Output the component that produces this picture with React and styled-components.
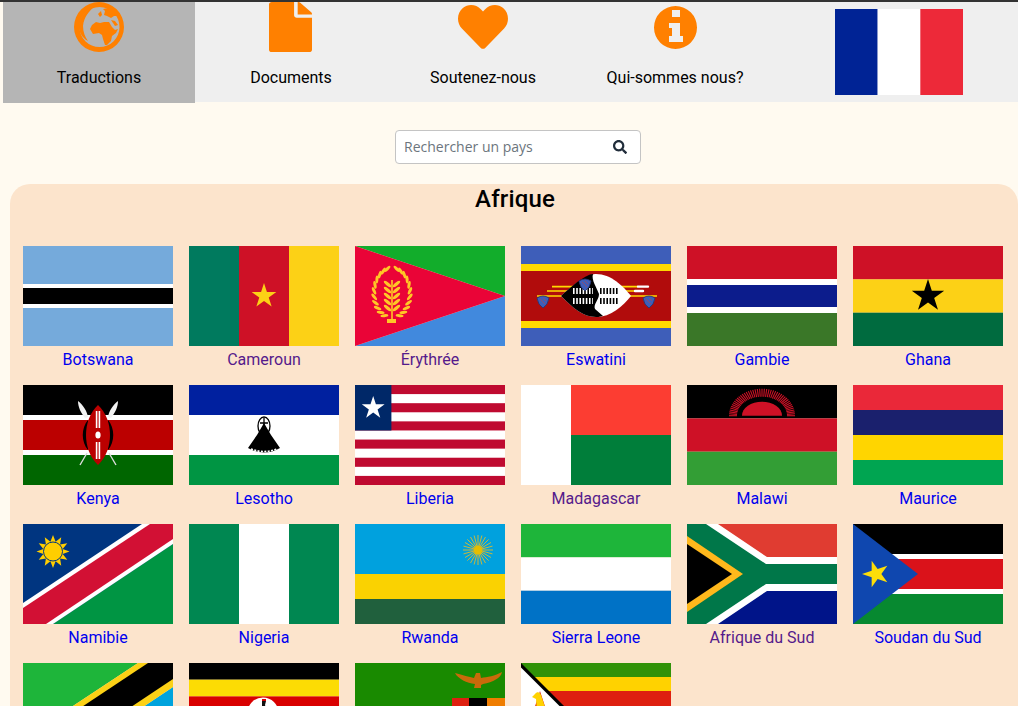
import React from 'react';
import styled, { createGlobalStyle } from 'styled-components';
import { FaHeart, FaSearch } from 'react-icons/fa';

const GlobalStyle = createGlobalStyle`
html, body {
    margin: 0;
    padding: 0;
    height: 706px;
    overflow: hidden;
    background: #fffaf0;
    font-family: Roboto, "Liberation Sans", sans-serif;
}
`;

const Page = styled.div`
height: 706px;
overflow: hidden;
border-top: 2px solid #333;
`;

const Nav = styled.nav`
display: flex;
height: 100px;
margin-left: 3px;
background: #efefef;
`;

const Tab = styled.a`
flex: 0 0 192px;
height: ${p => p.$active ? '101px' : '100px'};
overflow: hidden;
display: flex;
flex-direction: column;
align-items: center;
color: #000;
font-size: 16px;
background: ${p => p.$active ? '#b5b5b5' : 'transparent'};
`;

const TabIcon = styled.div`
height: 50px;
flex: none;
display: flex;
justify-content: center;
align-items: flex-end;
color: #ff8000;
padding-bottom: ${p => p.$bottom || 0}px;
padding-right: ${p => p.$right || 0}px;
box-sizing: border-box;
margin-bottom: 16px;
`;

const LangCell = styled.div`
flex: 1;
display: flex;
justify-content: center;
padding: 7px 0 0 9px;
`;

const SearchRow = styled.div`
display: flex;
justify-content: center;
padding: 28px 0 20px 18px;
`;

const SearchBox = styled.div`
width: 246px;
height: 34px;
box-sizing: border-box;
display: flex;
align-items: center;
justify-content: space-between;
padding: 0 13px 0 8px;
background: #fff;
border: 1px solid #c4c4c4;
border-radius: 4px;
color: #212d3b;
`;

const SearchInput = styled.input`
border: 0;
outline: 0;
width: 190px;
padding: 0;
margin-top: -2px;
background: transparent;
font: 14px "Open Sans", sans-serif;
&::placeholder { color: #6c757d; opacity: 1; }
`;

const Panel = styled.section`
margin-left: 10px;
background: #fce4cc;
border-radius: 20px 20px 0 0;
padding: 0 0 0 13px;
height: 600px;
`;

const Title = styled.h2`
margin: 0 0 31px -13px;
padding-left: 2px;
text-align: center;
font-size: 24px;
font-weight: 500;
letter-spacing: 0.15px;
line-height: 31px;
color: #000;
`;

const Grid = styled.div`
display: grid;
grid-template-columns: repeat(6, 150px);
column-gap: 16px;
grid-auto-rows: 139px;
`;

const Country = styled.a`
display: block;
text-align: center;
font-size: 16px;
line-height: 28px;
color: ${p => p.$visited ? '#551a8b' : '#0000ee'};
`;

const FlagSvg = styled.svg`
display: block;
width: ${p => p.$w || 150}px;
height: ${p => p.$h || 100}px;
`;

const Flag = ({ children, w, h }) => (
    <FlagSvg viewBox="0 0 150 100" $w={w} $h={h} preserveAspectRatio="none">
        {children}
    </FlagSvg>
);

const star = (cx, cy, r, rot = 0) => {
    const pts = [];
    for (let i = 0; i < 10; i++) {
        const a = (Math.PI / 5) * i - Math.PI / 2 + rot;
        const rr = i % 2 === 0 ? r : r * 0.382;
        pts.push(`${(cx + rr * Math.cos(a)).toFixed(2)},${(cy + rr * Math.sin(a)).toFixed(2)}`);
    }
    return pts.join(' ');
};

// sun with pointed rays (namibia)
const sunburst = (cx, cy, outer, inner, n) => {
    const pts = [];
    for (let i = 0; i < n * 2; i++) {
        const a = (Math.PI / n) * i - Math.PI / 2;
        const rr = i % 2 === 0 ? outer : inner;
        pts.push(`${(cx + rr * Math.cos(a)).toFixed(2)},${(cy + rr * Math.sin(a)).toFixed(2)}`);
    }
    return pts.join(' ');
};

const Rays = ({ cx, cy, r1, r2, n, color, width = 1 }) => (
    <g stroke={color} strokeWidth={width}>
        {Array.from({ length: n }).map((_, i) => {
            const a = (2 * Math.PI * i) / n;
            return <line key={i} x1={cx + r1 * Math.cos(a)} y1={cy + r1 * Math.sin(a)} x2={cx + r2 * Math.cos(a)} y2={cy + r2 * Math.sin(a)} />;
        })}
    </g>
);

const Bars = ({ rows }) => rows.map(([y, h, c]) => <rect key={y} x="0" y={y} width="150" height={h} fill={c} />);

// olive wreath of the eritrean flag, leaves laid out along two arcs
const Wreath = () => {
    const leaves = [];
    for (let i = 0; i < 11; i++) {
        const a = (Math.PI / 180) * (115 + i * 14);
        const x = 18 * Math.cos(a);
        const y = 47 + 25 * Math.sin(a);
        const deg = (a * 180) / Math.PI + 60;
        leaves.push(<ellipse key={`l${i}`} cx={37 + x} cy={y} rx="4" ry="1.5" transform={`rotate(${deg} ${37 + x} ${y})`} />);
        leaves.push(<ellipse key={`r${i}`} cx={37 - x} cy={y} rx="4" ry="1.5" transform={`rotate(${180 - deg} ${37 - x} ${y})`} />);
    }
    const twigs = [38, 44, 50, 56, 62];
    return (
        <g fill="#ffc726">
            {leaves}
            <path d="M37 75 V34" stroke="#ffc726" strokeWidth="1.6" />
            {twigs.map(y => (
                <g key={y}>
                    <ellipse cx="32.5" cy={y} rx="4.5" ry="1.7" transform={`rotate(40 32.5 ${y})`} />
                    <ellipse cx="41.5" cy={y} rx="4.5" ry="1.7" transform={`rotate(-40 41.5 ${y})`} />
                </g>
            ))}
            <rect x="32" y="73" width="9" height="4" />
        </g>
    );
};

const Tuft = ({ x, y }) => (
    <g>
        <path d={`M${x - 6} ${y - 3} Q${x} ${y - 7} ${x + 6} ${y - 3} Q${x + 5} ${y + 4} ${x} ${y + 7} Q${x - 5} ${y + 4} ${x - 6} ${y - 3}Z`} fill="#3e5eb9" stroke="#26346e" strokeWidth="0.8" />
        <path d={`M${x - 3} ${y - 2} L${x + 2} ${y + 3} M${x} ${y - 3} L${x + 3} ${y}`} stroke="#a04a5e" strokeWidth="0.8" />
    </g>
);

const flags = {
    botswana: <Bars rows={[[0, 100, '#75aadb'], [38, 24, '#fff'], [42, 16, '#000']]} />,
    cameroun: <>
        <Bars rows={[[0, 100, '#007a5e']]} />
        <rect x="50" width="50" height="100" fill="#ce1126" />
        <rect x="100" width="50" height="100" fill="#fcd116" />
        <polygon points={star(75, 50, 13)} fill="#fcd116" />
    </>,
    erythree: <>
        <polygon points="0,0 150,0 150,50" fill="#12ad2b" />
        <polygon points="0,100 150,100 150,50" fill="#4189dd" />
        <polygon points="0,0 150,50 0,100" fill="#ea0437" />
        <Wreath />
    </>,
    eswatini: <>
        <Bars rows={[[0, 100, '#3e5eb9'], [18, 64, '#ffd900'], [25, 50, '#b10c0c']]} />
        <path d="M31 40.6 H117 M26 45 H114 M16 50 H136" stroke="#ffd900" strokeWidth="1.6" />
        <path d="M117 40.6 L127 40.6 M114 45 L122 45" stroke="#fff" strokeWidth="2.4" strokeLinecap="round" />
        <path d="M40 50 C58 33 70 28 75 28 C90 28 102 40 110 50 C102 60 90 71 75 71 C62 71 52 62 40 50Z" fill="#fff" />
        <path d="M40 50 C58 33 68 28 72 28 C70 34 76 42 78 48 C78 54 72 58 74 63 L82 70 C78 71 76 71 75 71 C62 71 52 62 40 50Z" fill="#000" />
        <path d="M52 45h20M52 55h20" stroke="#fff" strokeWidth="6" strokeDasharray="1.6 1.6" />
        <path d="M79 45h19M79 55h19" stroke="#000" strokeWidth="6" strokeDasharray="1.6 1.6" />
        <Tuft x={64} y={38} />
        <Tuft x={22} y={55} />
        <Tuft x={128} y={55} />
    </>,
    gambie: <Bars rows={[[0, 100, '#ce1126'], [33, 34, '#fff'], [39, 22, '#0c1c8c'], [67, 33, '#3a7728']]} />,
    ghana: <>
        <Bars rows={[[0, 33.4, '#ce1126'], [33.4, 33.3, '#fcd116'], [66.7, 33.3, '#006b3f']]} />
        <polygon points={star(75, 50, 17)} fill="#000" />
    </>,
    kenya: <>
        <Bars rows={[[0, 30, '#000'], [30, 40, '#fff'], [35, 30, '#bb0000'], [70, 30, '#006600']]} />
        <path d="M57 80 L64 68 M93 80 L86 68" stroke="#ddd" strokeWidth="1.4" />
        <path d="M55 16 C60 20 64 26 65 32 L62 33 C58 28 55 22 55 16Z M95 16 C90 20 86 26 85 32 L88 33 C92 28 95 22 95 16Z" fill="#f2f2f2" />
        <path d="M65 35 C58 43 58 57 65 65Z M85 35 C92 43 92 57 85 65Z" fill="#000" />
        <path d="M75 20 C91 35 91 65 75 80 C59 65 59 35 75 20Z" fill="#bb0000" />
        <path d="M73.6 26 V43 M76.4 26 V43 M73.6 57 V74 M76.4 57 V74" stroke="#fff" strokeWidth="1.6" />
        <ellipse cx="75" cy="50" rx="2.6" ry="3.6" fill="#fff" />
    </>,
    lesotho: <>
        <Bars rows={[[0, 30, '#00209f'], [30, 40, '#fff'], [70, 30, '#009543']]} />
        <path d="M75 38 L82 50 L91 63 Q75 72 59 63 L68 50Z" fill="#000" />
        <ellipse cx="75" cy="41" rx="6" ry="9" fill="none" stroke="#000" strokeWidth="1.3" />
        <path d="M75 33 V48 M71 38 H79" stroke="#000" strokeWidth="1.3" />
        <path d="M62 64 Q75 69 88 64" fill="none" stroke="#fff" strokeWidth="1.6" strokeDasharray="2 1.4" />
    </>,
    liberia: <>
        <rect width="150" height="100" fill="#fff" />
        {[0, 2, 4, 6, 8, 10].map(i => <rect key={i} y={(i * 100) / 11} width="150" height={100 / 11} fill="#bf0a30" />)}
        <rect width="36.4" height="45.5" fill="#002868" />
        <polygon points={star(18.2, 23, 12)} fill="#fff" />
    </>,
    madagascar: <>
        <rect width="50" height="100" fill="#fff" />
        <rect x="50" width="100" height="50" fill="#fc3d32" />
        <rect x="50" y="50" width="100" height="50" fill="#007e3a" />
    </>,
    malawi: <>
        <Bars rows={[[0, 33.4, '#000'], [33.4, 33.3, '#ce1126'], [66.7, 33.3, '#339e35']]} />
        <path d="M55 30.7 A20 14 0 0 1 95 30.7Z" fill="#ce1126" />
        <g stroke="#ce1126" strokeWidth="1.1">
            {Array.from({ length: 45 }).map((_, i) => {
                const a = Math.PI + (Math.PI * i) / 44;
                return <line key={i} x1={75 + 25 * Math.cos(a)} y1={30.7 + 19 * Math.sin(a)} x2={75 + 33 * Math.cos(a)} y2={30.7 + 27 * Math.sin(a)} />;
            })}
        </g>
    </>,
    maurice: <Bars rows={[[0, 25, '#ea2839'], [25, 25, '#1a206d'], [50, 25, '#ffd500'], [75, 25, '#00a551']]} />,
    namibie: <>
        <rect width="150" height="100" fill="#003580" />
        <polygon points="30,100 150,20 150,100" fill="#009543" />
        <polygon points="0,79 119,0 150,0 150,20 30,100 0,100" fill="#fff" />
        <polygon points="0,84 127,0 150,0 150,15 23,100 0,100" fill="#d21034" />
        <polygon points={sunburst(30, 27.5, 16.5, 10, 12)} fill="#ffce00" />
        <circle cx="30" cy="27.5" r="9.5" fill="#ffce00" stroke="#003580" strokeWidth="1" />
    </>,
    nigeria: <>
        <rect width="150" height="100" fill="#008751" />
        <rect x="50" width="50" height="100" fill="#fff" />
    </>,
    rwanda: <>
        <Bars rows={[[0, 50, '#00a1de'], [50, 25, '#fad201'], [75, 25, '#20603d']]} />
        <Rays cx={123} cy={26} r1={4} r2={15} n={24} color="#c9b83c" width={1} />
        <circle cx="123" cy="26" r="4.5" fill="#e5be01" />
    </>,
    sierra: <Bars rows={[[0, 33.4, '#1eb53a'], [33.4, 33.3, '#fff'], [66.7, 33.3, '#0072c6']]} />,
    afriqueSud: <>
        <rect width="150" height="50" fill="#e03c31" />
        <rect y="50" width="150" height="50" fill="#001489" />
        <polygon points="0,0 31,0 80,33 150,33 150,67 80,67 31,100 0,100" fill="#fff" />
        <polygon points="0,0 19,0 79,40 150,40 150,60 79,60 19,100 0,100" fill="#007749" />
        <polygon points="0,12 56,50 0,88" fill="#ffb81c" />
        <polygon points="0,20 45,50 0,80" fill="#000" />
    </>,
    soudanSud: <>
        <Bars rows={[[0, 30, '#000'], [30, 40, '#fff'], [35, 30, '#da121a'], [70, 30, '#078930']]} />
        <polygon points="0,0 65,50 0,100" fill="#0f47af" />
        <polygon points={star(23, 50, 14, -Math.PI / 2)} fill="#fcdd09" />
    </>,
    tanzanie: <>
        <polygon points="0,0 115,0 0,76" fill="#1eb53a" />
        <polygon points="150,24 150,100 36,100" fill="#00a3dd" />
        <polygon points="115,0 150,0 150,24 36,100 0,100 0,76" fill="#fcd116" />
        <polygon points="125,0 150,0 150,16 24,100 0,100 0,83" fill="#000" />
    </>,
    ouganda: <>
        <Bars rows={[[0, 16.7, '#000'], [16.7, 16.7, '#fcdc04'], [33.4, 16.6, '#d90000'], [50, 16.7, '#000'], [66.7, 16.7, '#fcdc04'], [83.4, 16.6, '#d90000']]} />
        <circle cx="74" cy="50" r="15.5" fill="#fff" />
        <path d="M73 38 L77 38 L76 42 L78 48 L74 52 L71 48 L73 43Z" fill="#111" />
        <path d="M73 36 H77 V38 H73Z" fill="#d90000" />
    </>,
    zambie: <>
        <rect width="150" height="100" fill="#198a00" />
        <rect x="97" y="35" width="17" height="65" fill="#de2010" />
        <rect x="114" y="35" width="18" height="65" fill="#000" />
        <rect x="132" y="35" width="18" height="65" fill="#ef7d00" />
        <path d="M100 10 C108 12 114 14 119 15 L121 10 L125 10 L126 15 C132 14 140 13 147 9 C146 15 138 19 128 21 L126 22 L126 25 L119 25 L120 21 C112 20 103 16 100 10Z" fill="#c96a0a" />
    </>,
    zimbabwe: <>
        <Bars rows={[[0, 100, '#319208'], [14, 72, '#ffd200'], [28, 44, '#de2010'], [43, 14, '#000']]} />
        <polygon points="0,0 50,50 0,100" fill="#000" />
        <polygon points="0,4.5 45.5,50 0,95.5" fill="#fff" />
        <polygon points={star(19, 50, 22)} fill="#de2010" />
        <path d="M14 31 C16 28 19 29 20 32 L24 44 L16 50 L15 36 L11 34Z" fill="#ffd200" />
    </>,
};

// the last row's names are below the fold, so they are left out
const countries = [
    ['Botswana', 'botswana'], ['Cameroun', 'cameroun', true], ['Érythrée', 'erythree', true],
    ['Eswatini', 'eswatini'], ['Gambie', 'gambie'], ['Ghana', 'ghana'],
    ['Kenya', 'kenya'], ['Lesotho', 'lesotho'], ['Liberia', 'liberia'],
    ['Madagascar', 'madagascar', true], ['Malawi', 'malawi'], ['Maurice', 'maurice'],
    ['Namibie', 'namibie'], ['Nigeria', 'nigeria'], ['Rwanda', 'rwanda'],
    ['Sierra Leone', 'sierra'], ['Afrique du Sud', 'afriqueSud', true], ['Soudan du Sud', 'soudanSud'],
    ['', 'tanzanie'], ['', 'ouganda'], ['', 'zambie'], ['', 'zimbabwe'],
];

const Globe = () => (
    <svg width="50" height="50" viewBox="0 0 50 50" fill="#ff8000">
        <path fillRule="evenodd" d="M25 0 A25 25 0 1 0 25 50 A25 25 0 1 0 25 0Z M25.5 5 A20 20 0 1 1 25.5 45 A20 20 0 1 1 25.5 5Z" />
        <path d="M5 22 C7 13 13 7 21 4 C15 9 10 15 9 24 C9 30 11 35 14 39 C8 36 4 29 5 22Z" />
        <path d="M16 27 L18 23 L22 20 L26 21 L30 20 L35 20 L38 25 L41 28 L44 27 L42 31 L38 34 L37 39 L33 43 L31 43 L29 37 L28 33 L25 31 L19 32Z" />
        <path d="M24 12 L27 9 L28 13 L26 15Z" />
        <path d="M30 13 L31 9 L29 7 L34 6 L41 8 L44 14 L40 14 L37 16 L33 14Z" />
        <path d="M37 18 L41 19 L44 23 L41 24Z" />
    </svg>
);

const FileIcon = () => (
    <svg width="43" height="50" viewBox="0 0 384 512" preserveAspectRatio="none" fill="currentColor">
        <path d="M224 136V0H24C10.7 0 0 10.7 0 24v464c0 13.3 10.7 24 24 24h336c13.3 0 24-10.7 24-24V160H248c-13.2 0-24-10.8-24-24zm160-14.1v6.1H256V0h6.1c6.4 0 12.5 2.5 17 7l97.9 98c4.5 4.5 7 10.6 7 16.9z" />
    </svg>
);

const InfoIcon = () => (
    <svg width="43" height="43" viewBox="0 0 43 43" fill="currentColor">
        <path fillRule="evenodd" d="M21.5 0 A21.5 21.5 0 1 0 21.5 43 A21.5 21.5 0 1 0 21.5 0Z M18 4 H26 V11 H18Z M15 17 H26 V30 H29 V36 H15 V30 H18 V22 H15Z" />
    </svg>
);

export default function App() {
    return (
        <Page>
            <GlobalStyle />
            <Nav>
                <Tab $active>
                    <TabIcon><Globe /></TabIcon>
                    Traductions
                </Tab>
                <Tab>
                    <TabIcon $right={1}><FileIcon /></TabIcon>
                    Documents
                </Tab>
                <Tab>
                    <TabIcon><FaHeart size={50} /></TabIcon>
                    Soutenez-nous
                </Tab>
                <Tab>
                    <TabIcon $bottom={3}><InfoIcon /></TabIcon>
                    Qui-sommes nous?
                </Tab>
                <LangCell>
                    <Flag w={128} h={86}>
                        <rect width="50" height="100" fill="#002395" />
                        <rect x="50" width="50" height="100" fill="#fff" />
                        <rect x="100" width="50" height="100" fill="#ed2939" />
                    </Flag>
                </LangCell>
            </Nav>
            <SearchRow>
                <SearchBox>
                    <SearchInput placeholder="Rechercher un pays" />
                    <FaSearch size={14} />
                </SearchBox>
            </SearchRow>
            <Panel>
                <Title>Afrique</Title>
                <Grid>
                    {countries.map(([name, key, visited]) => (
                        <Country key={key} $visited={visited}>
                            <Flag>{flags[key]}</Flag>
                            {name}
                        </Country>
                    ))}
                </Grid>
            </Panel>
        </Page>
    );
}
